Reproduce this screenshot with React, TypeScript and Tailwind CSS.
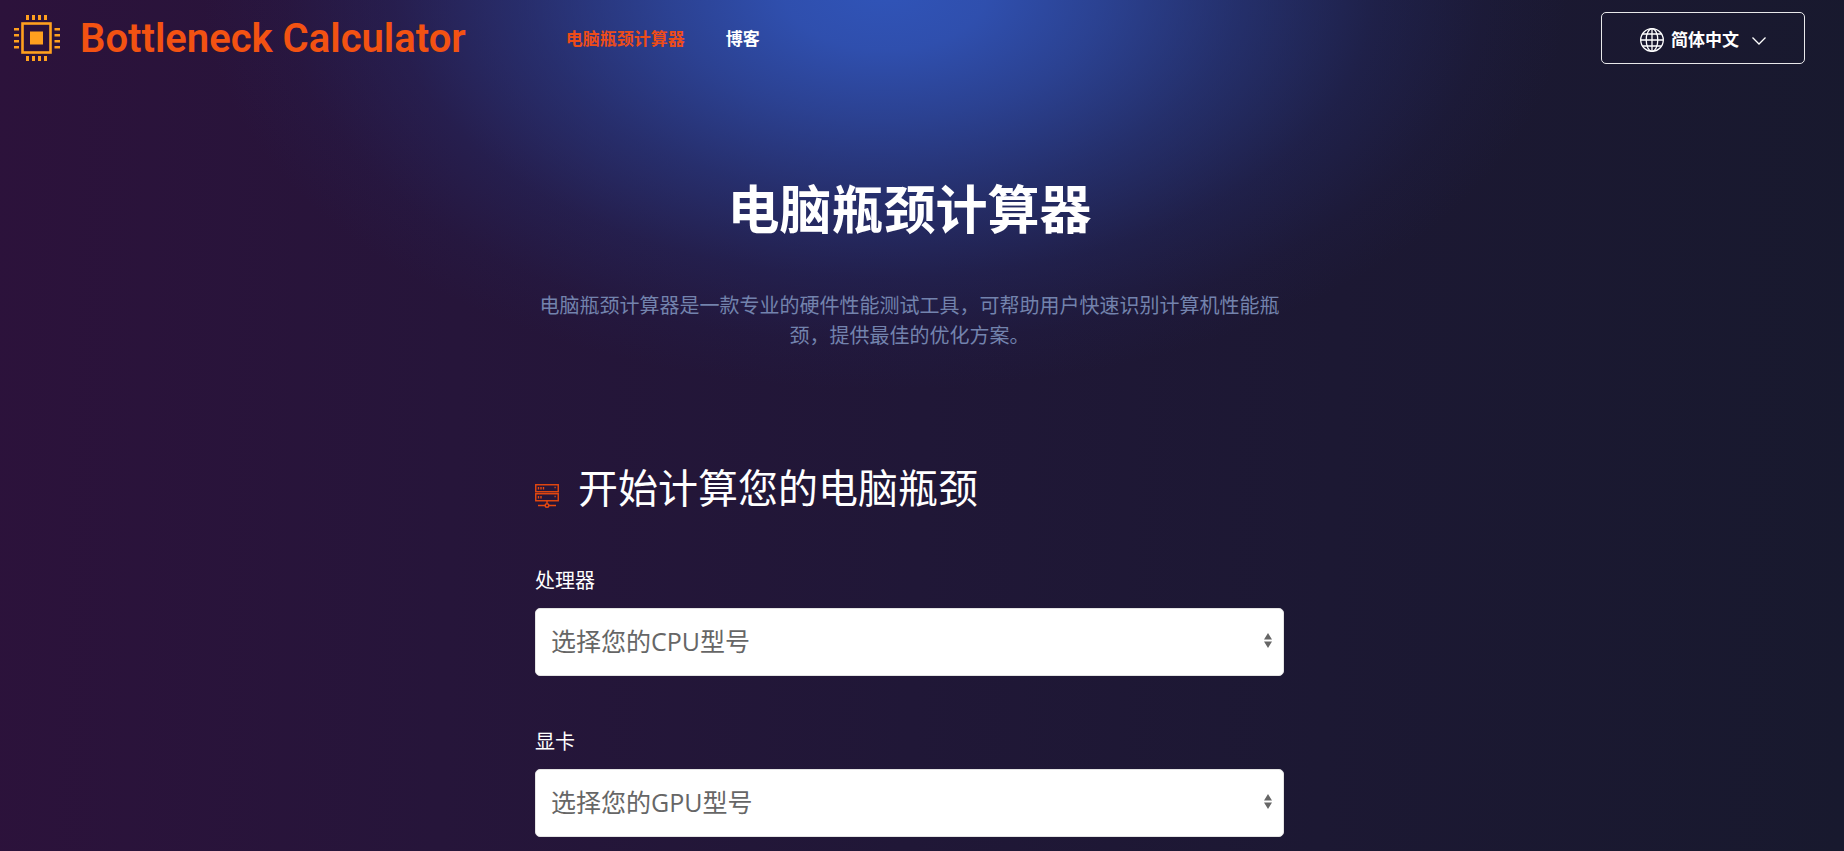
const links = [
  { href: '#calculator', label: '电脑瓶颈计算器', active: true },
  { href: '#blog', label: '博客', active: false },
];

const fields = [
  { id: 'cpu', label: '处理器', placeholder: '选择您的CPU型号' },
  { id: 'gpu', label: '显卡', placeholder: '选择您的GPU型号' },
];

const pins = [13, 19, 25, 31];

function ChipLogo() {
  return (
    <svg className="h-[46px] w-[46px] text-[#ffa01e]" viewBox="0 0 46 46" fill="currentColor" aria-hidden="true">
      {pins.map((p) => (
        <g key={p}>
          <rect x={p - 1} y="0" width="3" height="5" />
          <rect x={p - 1} y="41" width="3" height="5" />
          <rect x="0" y={p} width="5" height="2.5" />
          <rect x="40.5" y={p} width="5.5" height="2.5" />
        </g>
      ))}
      <rect x="8.5" y="8.5" width="28" height="29" fill="none" stroke="currentColor" strokeWidth="2.6" />
      <rect x="16" y="16.5" width="13" height="13" />
    </svg>
  );
}

function GlobeIcon() {
  return (
    <svg className="h-6 w-6" viewBox="0 0 24 24" fill="none" stroke="currentColor" strokeWidth="1.3" aria-hidden="true">
      <circle cx="12" cy="12" r="11.3" />
      <ellipse cx="12" cy="12" rx="5.8" ry="11.3" />
      <path d="M12 .7v22.6M.7 12h22.6M2.5 6h19M2.5 18h19" />
    </svg>
  );
}

function ServerIcon() {
  return (
    <svg className="h-6 w-6 text-[#e8490f]" viewBox="0 0 24 24" fill="none" stroke="currentColor" strokeWidth="1.4" aria-hidden="true">
      <rect x=".75" y=".75" width="22.5" height="7" />
      <rect x=".75" y="9.75" width="22.5" height="7" />
      <path d="M3.5 3v2.5M6 3v2.5M8.5 3v2.5M3.5 12v2.5M6 12v2.5M19.5 3.5h1.2M19.5 12.5h1.2M12 17v2.5M3 21.5h7M14 21.5h7" />
      <circle cx="12" cy="21.5" r="1.8" />
    </svg>
  );
}

export default function App() {
  return (
    <div className="min-h-screen overflow-hidden bg-[#1a1a2e] bg-[radial-gradient(ellipse_37%_400px_at_48%_-10px,#3054b8_0%,rgba(48,82,180,0.95)_15%,rgba(46,76,168,0.8)_32%,rgba(42,66,150,0.56)_52%,rgba(38,54,130,0.28)_72%,rgba(36,44,110,0.1)_88%,transparent_100%),linear-gradient(92deg,#2c123b_0%,#26153a_25%,#201737_50%,#1c1833_72%,#18192e_100%)] pr-[25px] font-['Open_Sans','Noto_Sans_CJK_SC',sans-serif] text-white">
      <header className="flex h-[76px] items-center justify-between pr-[14px] pl-[14px]">
        <div className="flex items-center">
          <a href="#home" className="flex items-center gap-[20px]">
            <ChipLogo />
            <span className="pt-[2px] font-['Roboto',sans-serif] text-[40px] leading-none font-semibold text-[#f35212]">
              Bottleneck Calculator
            </span>
          </a>
          <nav className="ml-[100px] flex gap-[41px] pt-[2px] font-bold">
            {links.map((link) => (
              <a
                key={link.href}
                href={link.href}
                className={link.active ? 'text-[17px] text-[#ee4c18]' : 'text-[17px] text-white'}
              >
                {link.label}
              </a>
            ))}
          </nav>
        </div>

        <button
          type="button"
          className="flex h-[52px] w-[204px] items-center justify-center gap-[7px] rounded-[5px] border border-white/90 pt-1 text-[17px] font-bold"
        >
          <GlobeIcon />
          <span>简体中文</span>
          <svg className="ml-[6px] h-[9px] w-[14px]" viewBox="0 0 14 9" fill="none" stroke="currentColor" strokeWidth="1.3" aria-hidden="true">
            <path d="M.5 1.5 7 8l6.5-6.5" />
          </svg>
        </button>
      </header>

      <main className="mx-auto max-w-[749px]">
        {/* Hero */}
        <section className="text-center">
          <h1 className="pt-[95px] text-[52px] leading-[76px] font-bold">电脑瓶颈计算器</h1>
          <p className="mt-[44px] text-[20px] leading-[30px] text-[#7383ad]">
            电脑瓶颈计算器是一款专业的硬件性能测试工具，可帮助用户快速识别计算机性能瓶颈，提供最佳的优化方案。
          </p>
        </section>

        {/* Calculator form */}
        <form className="mt-[107px]">
          <h2 className="flex items-center gap-[19px] text-[40px] leading-[60px]">
            <span className="pt-4">
              <ServerIcon />
            </span>
            开始计算您的电脑瓶颈
          </h2>
          <div className="mt-[48px] flex flex-col gap-[51px]">
            {fields.map((field) => (
              <div key={field.id}>
                <label htmlFor={field.id} className="block text-[20px] leading-[30px]">
                  {field.label}
                </label>
                <div className="relative mt-3">
                  <select
                    id={field.id}
                    defaultValue=""
                    className="h-[68px] w-full appearance-none rounded-[5px] border border-[#e4e4e4] bg-white px-[15px] text-[25px] text-[#666]"
                  >
                    <option value="">{field.placeholder}</option>
                  </select>
                  <svg className="pointer-events-none absolute top-[25px] right-[12px] h-[15px] w-2 text-[#666]" viewBox="0 0 8 15" fill="currentColor" aria-hidden="true">
                    <path d="M4 0l4 6.5H0zM4 15l4-6.5H0z" />
                  </svg>
                </div>
              </div>
            ))}
          </div>
        </form>
      </main>
    </div>
  );
}
